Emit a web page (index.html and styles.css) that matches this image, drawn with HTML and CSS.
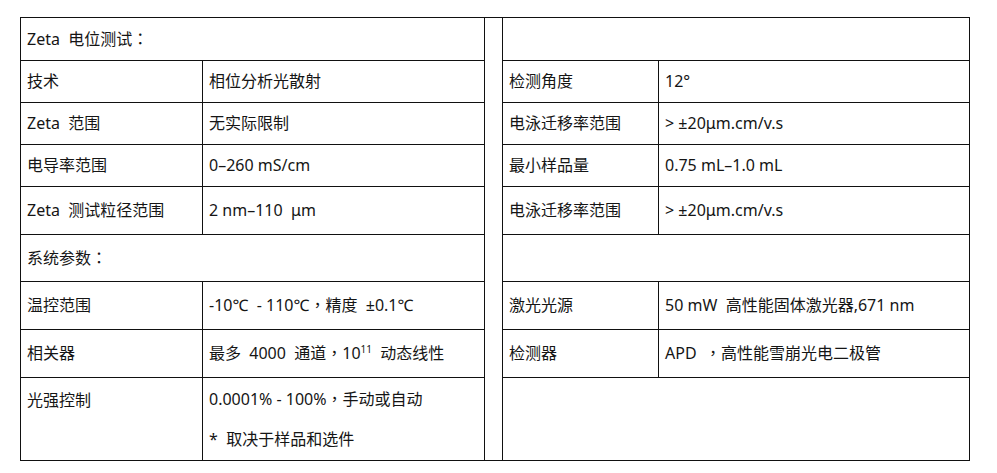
FILE: index.html
```html
<!DOCTYPE html>
<html lang="zh">
<head>
<meta charset="utf-8">
<title>Zeta 电位测试</title>
<link rel="stylesheet" href="styles.css">
</head>
<body>
<table class="spec">
  <colgroup>
    <col class="c1"><col class="c2"><col class="gap"><col class="c4"><col class="c5">
  </colgroup>
  <tr class="r43">
    <td colspan="2">Zeta&nbsp; 电位测试<span class="punct" lang="zh-Hant-TW">：</span></td>
    <td class="gapcell" rowspan="9"></td>
    <td colspan="2"></td>
  </tr>
  <tr class="r42">
    <td>技术</td><td>相位分析光散射</td>
    <td>检测角度</td><td>12°</td>
  </tr>
  <tr class="r42">
    <td>Zeta&nbsp; 范围</td><td>无实际限制</td>
    <td>电泳迁移率范围</td><td>&gt; ±20μm.cm/v.s</td>
  </tr>
  <tr class="r42">
    <td>电导率范围</td><td>0–260 mS/cm</td>
    <td>最小样品量</td><td>0.75 mL–1.0 mL</td>
  </tr>
  <tr class="r48">
    <td>Zeta&nbsp; 测试粒径范围</td><td>2 nm–110&nbsp; μm</td>
    <td>电泳迁移率范围</td><td>&gt; ±20μm.cm/v.s</td>
  </tr>
  <tr class="r47">
    <td colspan="2">系统参数<span class="punct" lang="zh-Hant-TW">：</span></td>
    <td colspan="2"></td>
  </tr>
  <tr class="r48">
    <td>温控范围</td><td>-10℃&nbsp; - 110℃<span class="punct" lang="zh-Hant-TW">，</span>精度&nbsp; ±0.1℃</td>
    <td>激光光源</td><td>50 mW&nbsp; 高性能固体激光器,671 nm</td>
  </tr>
  <tr class="r48">
    <td>相关器</td><td>最多&nbsp; 4000&nbsp; 通道<span class="punct" lang="zh-Hant-TW">，</span>10<sup>11</sup>&nbsp; 动态线性</td>
    <td>检测器</td><td>APD&nbsp; <span class="punct" lang="zh-Hant-TW">，</span>高性能雪崩光电二极管</td>
  </tr>
  <tr class="r83">
    <td class="top">光强控制</td>
    <td>
      <p class="line">0.0001% - 100%<span class="punct" lang="zh-Hant-TW">，</span>手动或自动</p>
      <p class="line">*&nbsp; 取决于样品和选件</p>
    </td>
    <td colspan="2"></td>
  </tr>
</table>
</body>
</html>
```

FILE: styles.css
```css
html, body {
  margin: 0;
  padding: 0;
  background: #ffffff;
}

body {
  padding: 17px 0 0 20px;
  font-family: "Noto Sans", "Noto Sans CJK SC", sans-serif;
  font-size: 16px;
  color: #151515;
}

.spec {
  border-collapse: collapse;
  table-layout: fixed;
  width: 950px;
}

.spec .c1 { width: 182px; }
.spec .c2 { width: 282px; }
.spec .gap { width: 18px; }
.spec .c4 { width: 156px; }
.spec .c5 { width: 311px; }

.spec td {
  border: 1px solid #111;
  padding: 0 6px 2px;
  vertical-align: middle;
  white-space: nowrap;
  line-height: 20px;
}

.spec td.gapcell {
  padding: 0;
}

.spec td.top {
  vertical-align: top;
  padding-top: 12px;
}

.r43 { height: 43px; }
.r42 { height: 42px; }
.r47 { height: 47px; }
.r48 { height: 48px; }
.r83 { height: 83px; }

.punct {
  font-family: "Noto Sans CJK TC", sans-serif;
}

.line {
  margin: 0;
  line-height: 20px;
}

.line + .line {
  margin-top: 20px;
}

sup {
  font-size: 10px;
  line-height: 0;
  vertical-align: 6px;
}
```
